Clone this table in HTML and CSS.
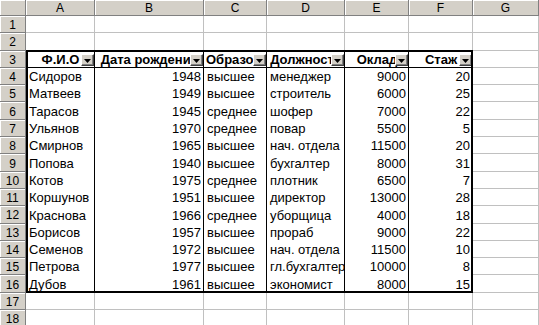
FILE: index.html
```html
<!DOCTYPE html>
<html lang="ru">
<head>
<meta charset="utf-8">
<title>Лист Excel</title>
<link rel="stylesheet" href="styles.css">
</head>
<body>
<div class="sheet">
  <div class="corner"></div>
  <div class="ch">A</div><div class="ch">B</div><div class="ch">C</div><div class="ch">D</div><div class="ch">E</div><div class="ch">F</div><div class="ch">G</div>

  <div class="rh">1</div><div class="c"></div><div class="c"></div><div class="c"></div><div class="c"></div><div class="c"></div><div class="c"></div><div class="c"></div>
  <div class="rh">2</div><div class="c"></div><div class="c"></div><div class="c"></div><div class="c"></div><div class="c"></div><div class="c"></div><div class="c"></div>

  <div class="rh">3</div>
  <div class="h">Ф.И.О<span class="dd"></span></div>
  <div class="h">Дата рождения<span class="dd"></span></div>
  <div class="h">Образование<span class="dd"></span></div>
  <div class="h">Должность<span class="dd"></span></div>
  <div class="h">Оклад<span class="dd"></span></div>
  <div class="h">Стаж<span class="dd"></span></div>
  <div class="c"></div>

  <div class="rh">4</div><div class="t">Сидоров</div><div class="t r">1948</div><div class="t">высшее</div><div class="t">менеджер</div><div class="t r">9000</div><div class="t r">20</div><div class="c"></div>
  <div class="rh">5</div><div class="t">Матвеев</div><div class="t r">1949</div><div class="t">высшее</div><div class="t">строитель</div><div class="t r">6000</div><div class="t r">25</div><div class="c"></div>
  <div class="rh">6</div><div class="t">Тарасов</div><div class="t r">1945</div><div class="t">среднее</div><div class="t">шофер</div><div class="t r">7000</div><div class="t r">22</div><div class="c"></div>
  <div class="rh">7</div><div class="t">Ульянов</div><div class="t r">1970</div><div class="t">среднее</div><div class="t">повар</div><div class="t r">5500</div><div class="t r">5</div><div class="c"></div>
  <div class="rh">8</div><div class="t">Смирнов</div><div class="t r">1965</div><div class="t">высшее</div><div class="t">нач. отдела</div><div class="t r">11500</div><div class="t r">20</div><div class="c"></div>
  <div class="rh">9</div><div class="t">Попова</div><div class="t r">1940</div><div class="t">высшее</div><div class="t">бухгалтер</div><div class="t r">8000</div><div class="t r">31</div><div class="c"></div>
  <div class="rh">10</div><div class="t">Котов</div><div class="t r">1975</div><div class="t">среднее</div><div class="t">плотник</div><div class="t r">6500</div><div class="t r">7</div><div class="c"></div>
  <div class="rh">11</div><div class="t">Коршунов</div><div class="t r">1951</div><div class="t">высшее</div><div class="t">директор</div><div class="t r">13000</div><div class="t r">28</div><div class="c"></div>
  <div class="rh">12</div><div class="t">Краснова</div><div class="t r">1966</div><div class="t">среднее</div><div class="t">уборщица</div><div class="t r">4000</div><div class="t r">18</div><div class="c"></div>
  <div class="rh">13</div><div class="t">Борисов</div><div class="t r">1957</div><div class="t">высшее</div><div class="t">прораб</div><div class="t r">9000</div><div class="t r">22</div><div class="c"></div>
  <div class="rh">14</div><div class="t">Семенов</div><div class="t r">1972</div><div class="t">высшее</div><div class="t">нач. отдела</div><div class="t r">11500</div><div class="t r">10</div><div class="c"></div>
  <div class="rh">15</div><div class="t">Петрова</div><div class="t r">1977</div><div class="t">высшее</div><div class="t">гл.бухгалтер</div><div class="t r">10000</div><div class="t r">8</div><div class="c"></div>
  <div class="rh">16</div><div class="t">Дубов</div><div class="t r">1961</div><div class="t">высшее</div><div class="t">экономист</div><div class="t r">8000</div><div class="t r">15</div><div class="c"></div>

  <div class="rh">17</div><div class="c"></div><div class="c"></div><div class="c"></div><div class="c"></div><div class="c"></div><div class="c"></div><div class="c"></div>
  <div class="rh">18</div><div class="c"></div><div class="c"></div><div class="c"></div><div class="c"></div><div class="c"></div><div class="c"></div><div class="c"></div>

  <div class="frame"></div>
</div>
</body>
</html>
```

FILE: styles.css
```css
html, body {
  margin: 0;
  padding: 0;
  background: #fff;
  overflow: hidden;
}

.sheet {
  position: relative;
  display: grid;
  grid-template-columns: 26px 69px 109px 63px 78px 64px 64px 66px;
  grid-template-rows: 16px repeat(18, 17.3px);
  width: 539px;
  font-family: "Liberation Sans", Arial, sans-serif;
  font-size: 13px;
  color: #000;
}

.sheet > div {
  box-sizing: border-box;
  overflow: hidden;
  white-space: nowrap;
}

.corner,
.ch,
.rh {
  background: #d4d0c8;
  border-right: 1px solid #808080;
  border-bottom: 1px solid #808080;
  box-shadow: inset 1px 1px 0 #fff;
  font-size: 12px;
  display: flex;
  align-items: center;
  justify-content: center;
  line-height: 14px;
}

.ch {
  padding-top: 1px;
}

.rh {
  padding-top: 2px;
}

.c {
  border-right: 1px solid #c0c0c0;
  border-bottom: 1px solid #c0c0c0;
}

.t {
  background: #fff;
  border-right: 1px solid #000;
  display: flex;
  align-items: flex-end;
  line-height: 14px;
  padding: 0 2px 1px 3px;
}

.r {
  justify-content: flex-end;
}

.h {
  position: relative;
  background: #fff;
  border-right: 1px solid #000;
  border-bottom: 1px solid #000;
  font-weight: bold;
  line-height: 14px;
  padding: 2px 1px 0 2px;
  text-align: center;
}

.dd {
  position: absolute;
  right: 0;
  bottom: 1px;
  width: 13px;
  height: 12px;
  box-sizing: border-box;
  background: #d4d0c8;
  border-top: 1px solid #fff;
  border-left: 1px solid #fff;
  border-right: 1px solid #404040;
  border-bottom: 1px solid #404040;
  box-shadow: inset -1px -1px 0 #808080;
}

.dd::after {
  content: "";
  position: absolute;
  left: 2px;
  top: 4px;
  width: 7px;
  height: 4px;
  background: #000;
  clip-path: polygon(0 0, 100% 0, 50% 100%);
}

.frame {
  position: absolute;
  grid-row: 4 / 18;
  grid-column: 2 / 8;
  top: -1px;
  left: 0;
  right: 0;
  bottom: 0;
  border: 2px solid #000;
  pointer-events: none;
  z-index: 2;
}
```
